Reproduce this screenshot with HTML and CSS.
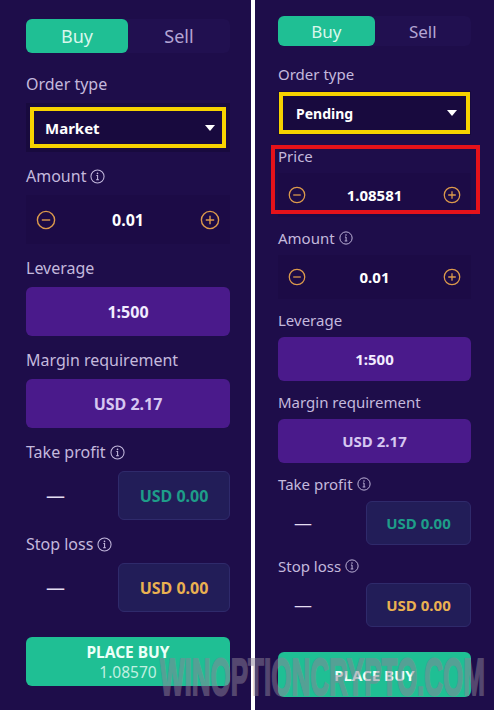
FILE: index.html
```html
<!DOCTYPE html>
<html lang="en">
  <head>
    <meta charset="UTF-8" />
    <meta name="viewport" content="width=device-width, initial-scale=1.0" />
    <title>Order ticket: Market vs Pending</title>
    <link rel="stylesheet" href="styles.css">
  </head>
  <body>
    <div class="screens">
      <!-- market order -->
      <section class="panel panel-large">
        <div class="tabs">
          <div class="tab tab-active">Buy</div>
          <div class="tab">Sell</div>
        </div>

        <div class="field field-first">
          <div class="label">Order type</div>
          <div class="select mark-yellow">
            <span>Market</span>
            <span class="caret"></span>
          </div>
        </div>

        <div class="field">
          <div class="label">Amount
            <svg class="info" viewBox="0 0 16 16"><circle cx="8" cy="8" r="7" /><circle class="dot" cx="8" cy="4.6" r="0.9" /><path d="M6.8 6.9h1.3v4.4M6.5 11.4h3" /></svg>
          </div>
          <div class="stepper">
            <svg class="step-icon" viewBox="0 0 20 20"><circle cx="10" cy="10" r="8.6" /><path d="M5.8 10h8.4" /></svg>
            <span class="value">0.01</span>
            <svg class="step-icon" viewBox="0 0 20 20"><circle cx="10" cy="10" r="8.6" /><path d="M5.8 10h8.4M10 5.8v8.4" /></svg>
          </div>
        </div>

        <div class="field">
          <div class="label">Leverage</div>
          <div class="box box-purple">1:500</div>
        </div>

        <div class="field">
          <div class="label">Margin requirement</div>
          <div class="box box-purple box-muted">USD 2.17</div>
        </div>

        <div class="field">
          <div class="label">Take profit
            <svg class="info" viewBox="0 0 16 16"><circle cx="8" cy="8" r="7" /><circle class="dot" cx="8" cy="4.6" r="0.9" /><path d="M6.8 6.9h1.3v4.4M6.5 11.4h3" /></svg>
          </div>
          <div class="row">
            <span class="dash">—</span>
            <div class="box box-outline text-teal">USD 0.00</div>
          </div>
        </div>

        <div class="field">
          <div class="label">Stop loss
            <svg class="info" viewBox="0 0 16 16"><circle cx="8" cy="8" r="7" /><circle class="dot" cx="8" cy="4.6" r="0.9" /><path d="M6.8 6.9h1.3v4.4M6.5 11.4h3" /></svg>
          </div>
          <div class="row">
            <span class="dash">—</span>
            <div class="box box-outline text-gold">USD 0.00</div>
          </div>
        </div>

        <button class="place">
          <span class="place-title">PLACE BUY</span>
          <span class="place-price">1.08570</span>
        </button>
      </section>

      <!-- pending order -->
      <section class="panel panel-small">
        <div class="tabs">
          <div class="tab tab-active">Buy</div>
          <div class="tab">Sell</div>
        </div>

        <div class="field field-first">
          <div class="label">Order type</div>
          <div class="select mark-yellow">
            <span>Pending</span>
            <span class="caret"></span>
          </div>
        </div>

        <div class="field mark-red">
          <div class="label">Price</div>
          <div class="stepper">
            <svg class="step-icon" viewBox="0 0 20 20"><circle cx="10" cy="10" r="8.6" /><path d="M5.8 10h8.4" /></svg>
            <span class="value">1.08581</span>
            <svg class="step-icon" viewBox="0 0 20 20"><circle cx="10" cy="10" r="8.6" /><path d="M5.8 10h8.4M10 5.8v8.4" /></svg>
          </div>
        </div>

        <div class="field">
          <div class="label">Amount
            <svg class="info" viewBox="0 0 16 16"><circle cx="8" cy="8" r="7" /><circle class="dot" cx="8" cy="4.6" r="0.9" /><path d="M6.8 6.9h1.3v4.4M6.5 11.4h3" /></svg>
          </div>
          <div class="stepper">
            <svg class="step-icon" viewBox="0 0 20 20"><circle cx="10" cy="10" r="8.6" /><path d="M5.8 10h8.4" /></svg>
            <span class="value">0.01</span>
            <svg class="step-icon" viewBox="0 0 20 20"><circle cx="10" cy="10" r="8.6" /><path d="M5.8 10h8.4M10 5.8v8.4" /></svg>
          </div>
        </div>

        <div class="field">
          <div class="label">Leverage</div>
          <div class="box box-purple">1:500</div>
        </div>

        <div class="field">
          <div class="label">Margin requirement</div>
          <div class="box box-purple box-muted">USD 2.17</div>
        </div>

        <div class="field">
          <div class="label">Take profit
            <svg class="info" viewBox="0 0 16 16"><circle cx="8" cy="8" r="7" /><circle class="dot" cx="8" cy="4.6" r="0.9" /><path d="M6.8 6.9h1.3v4.4M6.5 11.4h3" /></svg>
          </div>
          <div class="row">
            <span class="dash">—</span>
            <div class="box box-outline text-teal">USD 0.00</div>
          </div>
        </div>

        <div class="field">
          <div class="label">Stop loss
            <svg class="info" viewBox="0 0 16 16"><circle cx="8" cy="8" r="7" /><circle class="dot" cx="8" cy="4.6" r="0.9" /><path d="M6.8 6.9h1.3v4.4M6.5 11.4h3" /></svg>
          </div>
          <div class="row">
            <span class="dash">—</span>
            <div class="box box-outline text-gold">USD 0.00</div>
          </div>
        </div>

        <button class="place">
          <span class="place-title">PLACE BUY</span>
        </button>
      </section>

      <div class="watermark">WINOPTIONCRYPTO.COM</div>
    </div>
  </body>
</html>
```

FILE: styles.css
```css
body {
  margin: 0;
  background-color: #fff;
  font-family: "Noto Sans", "Open Sans", sans-serif;
}

.screens {
  position: relative;
  display: flex;
  gap: 4px;
  width: 494px;
  height: 710px;
  overflow: hidden;
  background-color: #fff;
}

.panel {
  position: relative;
  box-sizing: border-box;
  padding: var(--pad-top) var(--pad-r) 0 var(--pad-l);
  background-color: #1e0d4a;
}

.panel-large {
  width: 251px;
  --pad-top: 19px;
  --pad-l: 26px;
  --pad-r: 21px;
  --tab-h: 34px;
  --tab-fs: 18px;
  --lh: 22px;
  --fs-label: 16px;
  --fs-select: 15px;
  --fs-value: 16px;
  --gap: 13px;
  --gap-first: 20px;
  --label-gap: 8px;
  --box-h: 49px;
  --icon: 20px;
  --step-pad: 10px;
  --side-w: 112px;
  --dash-pad: 20px;
  --dash-fs: 19px;
  --info: 15px;
  --caret-r: 15px;
  --select-pad: 19px;
}

.panel-small {
  flex: 1;
  --pad-top: 16px;
  --pad-l: 23px;
  --pad-r: 23px;
  --tab-h: 30px;
  --tab-fs: 17px;
  --lh: 20px;
  --fs-label: 15px;
  --fs-select: 14px;
  --fs-value: 15px;
  --gap: 11px;
  --gap-first: 18px;
  --label-gap: 7px;
  --box-h: 44px;
  --icon: 18px;
  --step-pad: 10px;
  --side-w: 105px;
  --dash-pad: 16px;
  --dash-fs: 18px;
  --info: 14px;
  --caret-r: 14px;
  --select-pad: 18px;
}

/* buy / sell switch */
.tabs {
  display: grid;
  grid-template-columns: 1fr 1fr;
  height: var(--tab-h);
  background-color: #211050;
  border-radius: 6px;
}

.tab {
  display: flex;
  align-items: center;
  justify-content: center;
  font-size: var(--tab-fs);
  color: #b4a5d4;
  border-radius: 6px;
}

.tab-active {
  background-color: #1fbf94;
  color: #d9f7ec;
}

.field {
  position: relative;
  margin-top: var(--gap);
}

.field-first {
  margin-top: var(--gap-first);
}

.label {
  display: flex;
  align-items: center;
  gap: 4px;
  height: var(--lh);
  margin-bottom: var(--label-gap);
  font-size: var(--fs-label);
  color: #c4b9dd;
}

.info {
  width: var(--info);
  height: var(--info);
  fill: none;
  stroke: #c4b9dd;
  stroke-width: 1.1;
}

.info .dot {
  fill: #c4b9dd;
  stroke: none;
}

/* order type dropdown */
.select {
  display: flex;
  align-items: center;
  justify-content: space-between;
  height: var(--box-h);
  padding: 0 var(--caret-r) 0 var(--select-pad);
  box-sizing: border-box;
  background-color: #180a3e;
  font-size: var(--fs-select);
  font-weight: bold;
  color: #fff;
}

.caret {
  width: 0;
  height: 0;
  border-left: 5px solid transparent;
  border-right: 5px solid transparent;
  border-top: 6px solid #fff;
}

.mark-yellow {
  outline: 4px solid #f6d200;
  outline-offset: -8px;
}

.panel-small .mark-yellow {
  outline-offset: -5px;
}

.mark-red::after {
  content: "";
  position: absolute;
  top: -1px;
  bottom: 3px;
  left: -7px;
  right: -9px;
  border: 4px solid #e5121a;
  pointer-events: none;
}

/* + / - inputs */
.stepper {
  display: flex;
  align-items: center;
  justify-content: space-between;
  height: var(--box-h);
  padding: 0 var(--step-pad);
  background-color: #1c0b46;
}

.step-icon {
  width: var(--icon);
  height: var(--icon);
  fill: none;
  stroke: #dc9a4c;
  stroke-width: 1.4;
}

.value {
  font-size: var(--fs-value);
  font-weight: bold;
  color: #fff;
}

.box {
  display: flex;
  align-items: center;
  justify-content: center;
  height: var(--box-h);
  box-sizing: border-box;
  border-radius: 6px;
  font-size: var(--fs-value);
  font-weight: bold;
}

.box-purple {
  background-color: #4a1a8b;
  color: #f2ecff;
}

.box-muted {
  color: #d6c7f1;
}

.row {
  display: flex;
  align-items: center;
}

.dash {
  flex: 1;
  padding-left: var(--dash-pad);
  font-size: var(--dash-fs);
  color: #e4ddf2;
}

.box-outline {
  width: var(--side-w);
  background-color: #221d58;
  border: 1px solid #2f2a6b;
}

.text-teal {
  color: #1e9d89;
}

.text-gold {
  color: #eab151;
}

/* submit */
.place {
  display: flex;
  flex-direction: column;
  align-items: center;
  justify-content: center;
  width: 100%;
  height: var(--box-h);
  margin-top: 25px;
  border: none;
  border-radius: 6px;
  background-color: #1fbf94;
  font-family: inherit;
  font-size: 15.5px;
  line-height: 20px;
}

.panel-small .place {
  height: 45px;
  font-size: 15px;
}

.place-title {
  font-weight: bold;
  color: #ecfff8;
}

.place-price {
  color: #c1f0e1;
}

.watermark {
  position: absolute;
  left: 160px;
  top: 651px;
  font-family: "Liberation Sans", Arial, sans-serif;
  font-weight: bold;
  font-size: 52px;
  line-height: 1;
  white-space: nowrap;
  color: rgb(140, 130, 150);
  -webkit-text-stroke: 2px rgb(140, 130, 150);
  opacity: 0.5;
  transform: scaleX(0.5);
  transform-origin: left top;
  pointer-events: none;
}
```
